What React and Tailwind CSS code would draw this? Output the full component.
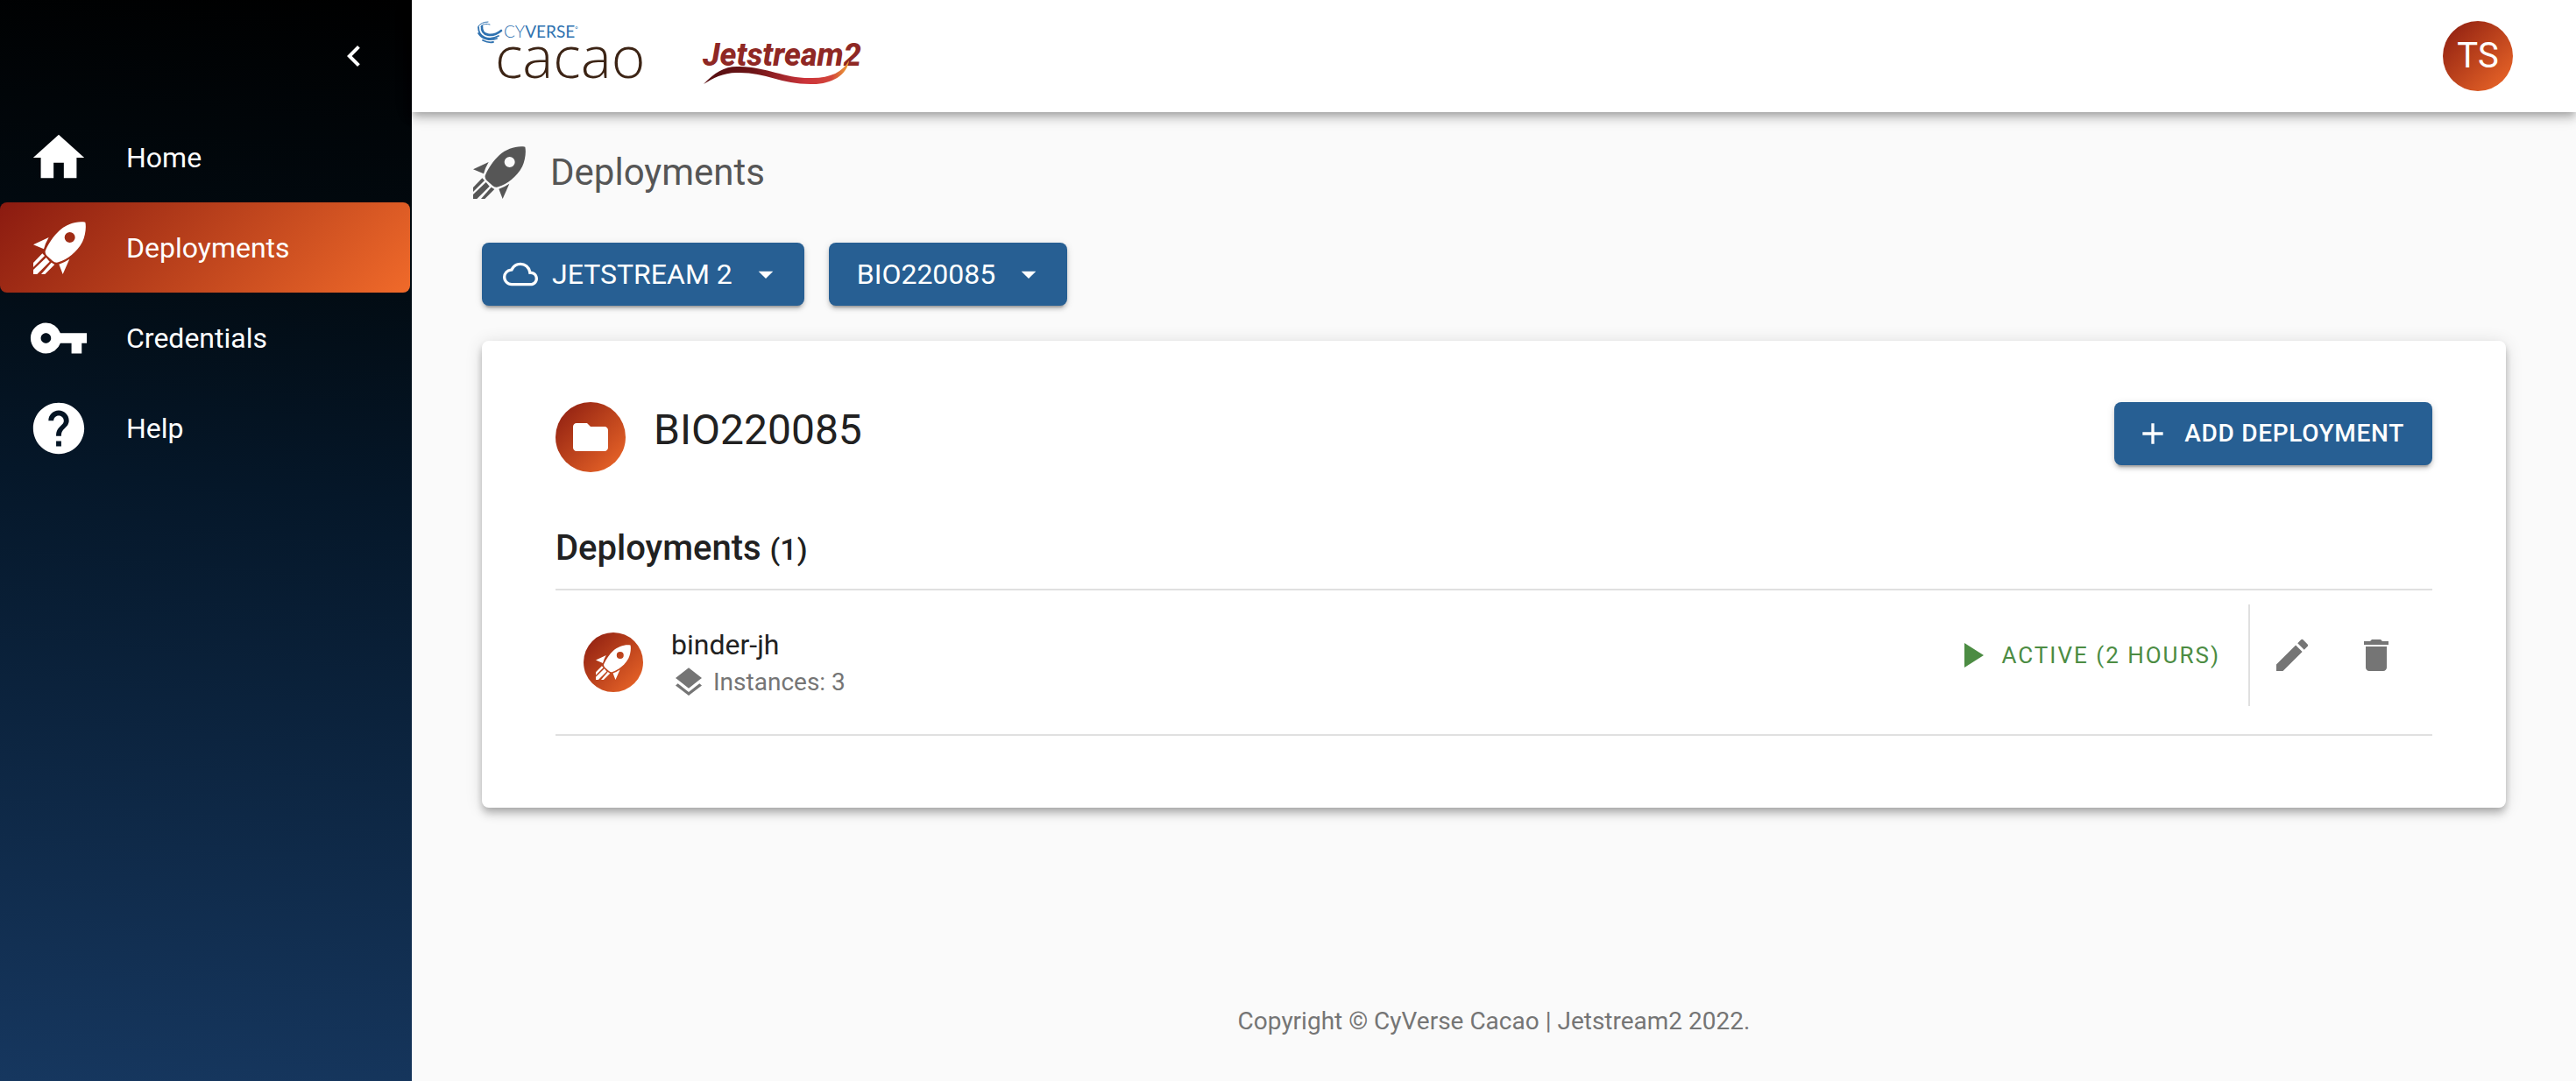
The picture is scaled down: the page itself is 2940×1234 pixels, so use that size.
import {
  MdAdd,
  MdArrowDropDown,
  MdChevronLeft,
  MdDelete,
  MdEdit,
  MdFolder,
  MdHelp,
  MdHome,
  MdLayers,
  MdOutlineCloud,
  MdPlayArrow,
  MdVpnKey,
} from "react-icons/md";

const emberGradient = "bg-linear-135 from-[#8b1a10] to-[#f06a2a]";

function RocketIcon({ className }) {
  return (
    <svg viewBox="0 0 180 180" fill="currentColor" className={className} aria-hidden="true">
      <path
        fillRule="evenodd"
        d="M178 2C150-3 115 8 90 30C70 48 52 75 42 98Q38 106 46 116L66 134Q76 144 88 138C115 130 150 105 168 70C178 48 182 20 178 2ZM125 36a18 18 0 1 1 0 36a18 18 0 1 1 0-36Z"
      />
      <path d="M0 79L53 54Q41 74 36 94Z" />
      <path d="M101 180L88 146Q106 140 124 128Z" />
      <path d="M31 109L39 117L0 156V141Z" />
      <path d="M44 123L56 137L13 180H0V165Z" />
      <path d="M62 140L73 147L40 180H27Z" />
    </svg>
  );
}

function CacaoLogo() {
  return (
    <svg viewBox="0 0 200 80" className="h-20 w-[200px] overflow-visible" role="img" aria-label="CyVerse Cacao">
      <g fill="none" stroke="#2f72b0" strokeLinecap="round">
        <path d="M8 6C7 17 20 19 30 11" strokeWidth="2.6" />
        <path d="M4 7C4 19 16 23 27 17" strokeWidth="1.8" />
        <path d="M4 14C8 20 16 23 25 20" strokeWidth="1.8" />
        <path d="M9 22C13 24 16 25 21 24" strokeWidth="1.8" />
        <path d="M4 6C6 3 10 1 15 1" strokeWidth="1" />
        <path d="M7 6C10 3 13 3 17 4" strokeWidth="1" />
      </g>
      <text x="33" y="19" fontSize="19" fill="#2f72b0" fontFamily="Lato, sans-serif">
        <tspan fontWeight="300">CY</tspan>
        <tspan>VERSE</tspan>
        <tspan fontSize="8" dy="-7">°</tspan>
      </text>
      <text x="23" y="65" fontSize="66" fontWeight="350" fill="#3c2415" fontFamily="'Open Sans', sans-serif">
        cacao
      </text>
    </svg>
  );
}

function JetstreamLogo() {
  return (
    <svg viewBox="0 0 190 80" className="h-20 w-[190px] overflow-visible" role="img" aria-label="Jetstream2">
      <defs>
        <linearGradient id="swoosh" x1="0" x2="1">
          <stop offset="0.1" stopColor="#5a1013" />
          <stop offset="0.35" stopColor="#6e1517" />
          <stop offset="0.7" stopColor="#cc333a" />
          <stop offset="0.88" stopColor="#d2453a" />
          <stop offset="1" stopColor="#efa535" />
        </linearGradient>
      </defs>
      <text
        x="4"
        y="51"
        fontSize="36"
        fontWeight="800"
        fontStyle="italic"
        fill="#8f2824"
        fontFamily="Roboto, sans-serif"
      >
        Jetstream2
      </text>
      <path
        d="M5 72C18 58 30 51 46 52C80 53 98 66 129 65C150 65 164 58 171 45C169 62 150 73 127 72C94 72 76 59 46 59C29 58 16 65 5 72Z"
        fill="url(#swoosh)"
      />
    </svg>
  );
}

const navItems = [
  { label: "Home", Icon: MdHome, size: "size-[70px]" },
  { label: "Deployments", Icon: RocketIcon, size: "mr-1 ml-1.5 size-[60px]", active: true },
  { label: "Credentials", Icon: MdVpnKey, size: "size-[70px]" },
  { label: "Help", Icon: MdHelp, size: "size-[70px]" },
];

function Sidebar() {
  return (
    <aside className="w-[470px] shrink-0 bg-linear-[5deg,#16375f_0%,#051729_55%,#020b12_75%,#000000_100%] text-white">
      <div className="flex h-32 items-center justify-end pr-[42px]">
        <button type="button" aria-label="Collapse menu">
          <MdChevronLeft className="size-12" />
        </button>
      </div>
      <nav className="pr-0.5">
        {navItems.map(({ label, Icon, size, active }) => (
          <a
            key={label}
            href={`#${label.toLowerCase()}`}
            className={`flex h-[103px] items-center gap-[42px] rounded-lg pl-8 text-[32px] ${active ? emberGradient : ""}`}
          >
            <Icon className={size} />
            {label}
          </a>
        ))}
      </nav>
    </aside>
  );
}

function Header() {
  return (
    <header className="z-10 flex h-32 items-center bg-white px-[72px] shadow-[0_4px_8px_-2px_#00000033,0_8px_10px_0_#00000024,0_2px_20px_0_#0000001f]">
      <CacaoLogo />
      <div className="ml-14">
        <JetstreamLogo />
      </div>
      <button
        type="button"
        aria-label="Account"
        className={`ml-auto flex size-20 items-center justify-center rounded-full text-[40px] text-white ${emberGradient}`}
      >
        TS
      </button>
    </header>
  );
}

const blueButton =
  "flex h-[72px] items-center rounded-lg bg-[#275f93] text-white shadow-[0_6px_2px_-4px_#00000033,0_4px_4px_0_#00000024,0_2px_10px_0_#0000001f]";

function DeploymentRow() {
  return (
    <li className="flex items-start border-b-2 border-[#e0e0e0] pt-4 pr-10 pb-8 pl-8">
      <div className={`mt-8 flex size-[68px] items-center justify-center rounded-full text-white ${emberGradient}`}>
        <RocketIcon className="size-10" />
      </div>
      <div className="mt-6 ml-8">
        <div className="text-[32px] leading-[44px] text-[#212121]">binder-jh</div>
        <div className="flex items-center gap-2 text-[28px] leading-[42px] text-[#757575]">
          <MdLayers className="size-10" />
          Instances: 3
        </div>
      </div>
      <div className="ml-auto flex h-[116px] items-center text-[#757575]">
        <div className="flex items-center gap-2.5 pr-8 text-[26px] tracking-[2px] text-[#4c8c43]">
          <MdPlayArrow className="size-12" />
          ACTIVE (2 HOURS)
        </div>
        <div className="flex h-full items-center gap-12 border-l-2 border-[#e0e0e0] pl-6">
          <button type="button" aria-label="Edit deployment">
            <MdEdit className="size-12" />
          </button>
          <button type="button" aria-label="Delete deployment">
            <MdDelete className="size-12" />
          </button>
        </div>
      </div>
    </li>
  );
}

export default function App() {
  return (
    <div className="flex min-h-screen bg-[#fafafa] font-['Roboto',sans-serif]">
      <Sidebar />
      <div className="flex min-w-0 flex-1 flex-col">
        <Header />
        <main className="flex flex-1 flex-col px-20">
          <h1 className="-ml-2.5 flex h-[137px] items-center gap-7 text-[42px] text-[#565656]">
            <RocketIcon className="size-[60px]" />
            Deployments
          </h1>
          <div className="mt-3 flex gap-7">
            <button type="button" className={`${blueButton} gap-4 px-6 text-[32px]`}>
              <MdOutlineCloud className="size-10" />
              JETSTREAM 2
              <MdArrowDropDown className="ml-0.5 size-10" />
            </button>
            <button type="button" className={`${blueButton} gap-4 pr-6 pl-8 text-[32px]`}>
              BIO220085
              <MdArrowDropDown className="ml-0.5 size-10" />
            </button>
          </div>
          <section className="mt-10 rounded-lg bg-white px-[84px] pt-[70px] pb-[82px] shadow-[0_4px_8px_-2px_#00000033,0_8px_10px_0_#00000024,0_2px_20px_0_#0000001f]">
            <div className="flex items-start">
              <div className={`flex size-20 items-center justify-center rounded-full text-white ${emberGradient}`}>
                <MdFolder className="size-12" />
              </div>
              <h2 className="ml-8 text-5xl leading-[64px] text-[#212121]">BIO220085</h2>
              <button type="button" className={`${blueButton} ml-auto gap-4 pr-8 pl-6 text-[28px] font-medium tracking-wide`}>
                <MdAdd className="size-10" />
                ADD DEPLOYMENT
              </button>
            </div>
            <h3 className="mt-[57px] text-[40px] leading-[60px] font-medium text-[#212121]">
              Deployments <span className="text-[34px] leading-none">(1)</span>
            </h3>
            <ul className="mt-4 border-t-2 border-[#e0e0e0]">
              <DeploymentRow />
            </ul>
          </section>
          <footer className="mt-auto pb-12 text-center text-[28px] leading-10 text-[#757575]">
            Copyright © CyVerse Cacao | Jetstream2 2022.
          </footer>
        </main>
      </div>
    </div>
  );
}
